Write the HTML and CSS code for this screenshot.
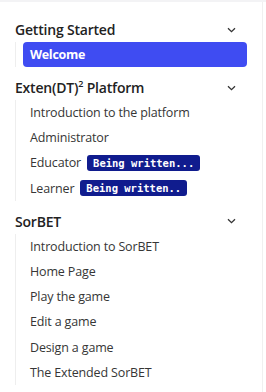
FILE: index.html
```html
<!DOCTYPE html>
<html>
<head>
<meta charset="utf-8">
<link rel="stylesheet" href="styles.css">
</head>
<body>
<div class="topbar"></div>
<nav class="sidebar">
  <section class="group">
    <div class="group-head">
      <span class="group-title">Getting Started</span>
      <svg class="chev" width="9" height="6" viewBox="0 0 9 6"><path d="M1 1.2 L4.5 4.6 L8 1.2" fill="none" stroke="#333" stroke-width="1.3"/></svg>
    </div>
    <ul class="items">
      <li class="item active">Welcome</li>
    </ul>
  </section>
  <section class="group">
    <div class="group-head">
      <span class="group-title">Exten(DT)<sup>2</sup> Platform</span>
      <svg class="chev" width="9" height="6" viewBox="0 0 9 6"><path d="M1 1.2 L4.5 4.6 L8 1.2" fill="none" stroke="#333" stroke-width="1.3"/></svg>
    </div>
    <ul class="items">
      <li class="item">Introduction to the platform</li>
      <li class="item">Administrator</li>
      <li class="item">Educator <span class="badge">Being written...</span></li>
      <li class="item">Learner <span class="badge">Being written..</span></li>
    </ul>
  </section>
  <section class="group">
    <div class="group-head">
      <span class="group-title">SorBET</span>
      <svg class="chev" width="9" height="6" viewBox="0 0 9 6"><path d="M1 1.2 L4.5 4.6 L8 1.2" fill="none" stroke="#333" stroke-width="1.3"/></svg>
    </div>
    <ul class="items">
      <li class="item">Introduction to SorBET</li>
      <li class="item">Home Page</li>
      <li class="item">Play the game</li>
      <li class="item">Edit a game</li>
      <li class="item">Design a game</li>
      <li class="item">The Extended SorBET</li>
    </ul>
  </section>
</nav>
</body>
</html>
```
FILE: styles.css
```css
html, body {
  margin: 0;
  padding: 0;
  background: #fff;
}
body {
  font-family: "Open Sans", "Noto Sans", sans-serif;
  color: #333;
  width: 266px;
  height: 392px;
  overflow: hidden;
}
.topbar {
  height: 2px;
  background: #f3f3f5;
}
.sidebar {
  width: 263px;
  height: 390px;
  box-sizing: border-box;
  border-right: 1px solid #f0f0f0;
  padding: 15px 0 0 15px;
}
.group {
  width: 232px;
  margin-bottom: 8px;
}
.group-head {
  display: flex;
  align-items: center;
  justify-content: space-between;
  height: 25px;
}
.group-title {
  font-size: 14px;
  font-weight: 600;
  color: #222;
  letter-spacing: -0.2px;
}
.group-title sup {
  font-size: 9px;
  line-height: 0;
}
.chev {
  margin-right: 11px;
}
.items {
  list-style: none;
  margin: 0;
  padding: 0;
  border-left: 1px solid #eeeeee;
}
.item {
  height: 25.2px;
  display: flex;
  align-items: center;
  gap: 6px;
  padding-left: 14px;
  font-size: 12.5px;
  color: #363636;
  letter-spacing: -0.15px;
}
.item.active {
  height: 25px;
  margin-left: 7px;
  padding-left: 7px;
  background: #3f4cf2;
  color: #fff;
  font-weight: 700;
  border-radius: 4px;
  font-size: 12.5px;
  letter-spacing: -0.3px;
}
.badge {
  display: inline-block;
  background: #101c8e;
  color: #fff;
  font-family: "DejaVu Sans Mono", "Liberation Mono", monospace;
  font-weight: 700;
  font-size: 10.5px;
  line-height: 16px;
  padding: 0 6px;
  border-radius: 3px;
  letter-spacing: 0;
}
```
